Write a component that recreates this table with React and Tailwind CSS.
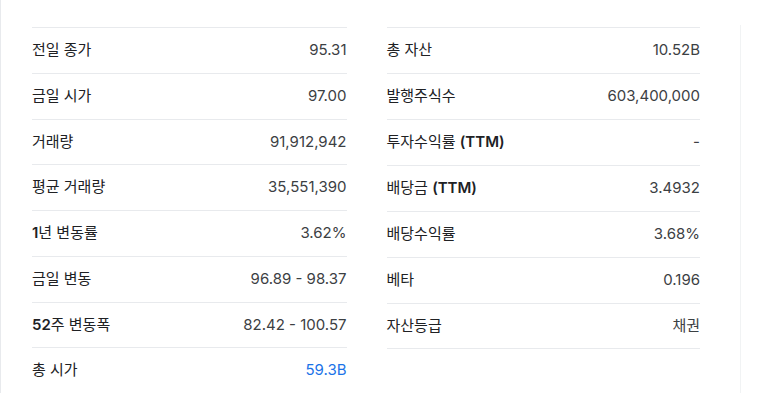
import React from 'react';

const LEFT = [
    { l: '전일 종가', v: '95.31' },
    { l: '금일 시가', v: '97.00' },
    { l: '거래량', v: '91,912,942' },
    { l: '평균 거래량', v: '35,551,390' },
    { l: '1년 변동률', v: '3.62%' },
    { l: '금일 변동', v: '96.89 - 98.37' },
    { l: '52주 변동폭', v: '82.42 - 100.57' },
    { l: '총 시가', v: '59.3B', link: true },
];

const RIGHT = [
    { l: '총 자산', v: '10.52B' },
    { l: '발행주식수', v: '603,400,000' },
    { l: '투자수익률 (TTM)', v: '-' },
    { l: '배당금 (TTM)', v: '3.4932' },
    { l: '배당수익률', v: '3.68%' },
    { l: '베타', v: '0.196' },
    { l: '자산등급', v: '채권' },
];

// latin runs in labels render heavier than the hangul in the reference
const Label = ({ text }) => (
    <span className="text-[15px] text-[#202124]">
        {text.split(/([A-Za-z0-9()]+)/).map((p, i) =>
            /[A-Za-z0-9]/.test(p)
                ? <span key={i} className="font-semibold">{p}</span>
                : <span key={i}>{p}</span>
        )}
    </span>
);

const Row = ({ l, v, link, bottom }) => (
    <div className={`h-[46px] flex items-center justify-between border-t border-[#e8eaed] ${bottom ? 'border-b' : ''}`}>
        <Label text={l} />
        <span className={`text-[15px] ${link ? 'text-[#1a73e8]' : 'text-[#3c4043]'}`}>{v}</span>
    </div>
);

export default function App() {
    return (
        <div className="w-[767px] h-[393px] bg-white overflow-hidden flex"
            style={{ fontFamily: 'Inter, "Noto Sans CJK KR", sans-serif' }}>
            <div className="w-[740px] border-l border-[#e8eaed] pt-[27px] pl-[31px] pr-[40px] flex gap-[40px]">
                <div className="w-[315px] flex flex-col">
                    {LEFT.map(r => <Row key={r.l} {...r} />)}
                </div>
                <div className="w-[314px] flex flex-col self-start">
                    {RIGHT.map((r, i) => <Row key={r.l} {...r} bottom={i === RIGHT.length - 1} />)}
                </div>
            </div>
            <div className="mt-[25px] w-px bg-[#f1f3f4]" />
        </div>
    );
}
